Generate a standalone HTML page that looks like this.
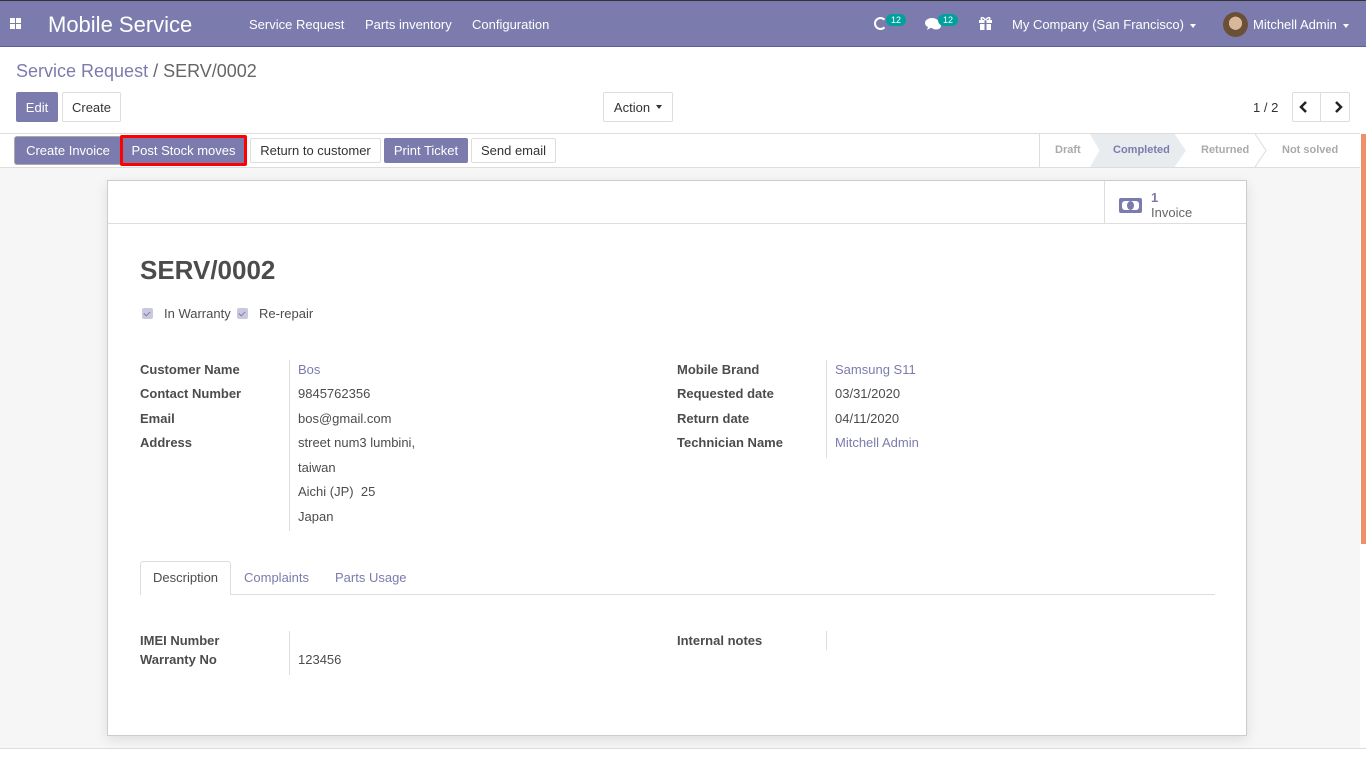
<!DOCTYPE html>
<html><head><meta charset="utf-8"><style>
*{box-sizing:border-box;margin:0;padding:0}
body{width:1366px;height:768px;overflow:hidden;font-family:"Liberation Sans",sans-serif;font-size:13px;color:#4c4c4c;background:#fff;position:relative}
.a{position:absolute;white-space:nowrap}
.nav{position:absolute;left:0;top:0;width:1366px;height:47px;background:#7c7bad;border-top:1px solid #333;border-bottom:1px solid #5f5e97}
.nav .a{color:#fff}
.btn{position:absolute;height:30px;border:1px solid #ddd;background:#fff;color:#333;font-size:13px;display:flex;align-items:center;justify-content:center;border-radius:2px}
.pr{background:#7c7bad;color:#fff;border-color:#7c7bad}
.lbl{font-weight:bold;color:#4c4c4c}
.lnk{color:#7c7bad}
.badge{position:absolute;background:#00a09d;color:#fff;font-size:9px;border-radius:8px;padding:1px 5px}
.cb{position:absolute;width:11px;height:11px;background:#c9c8df;border-radius:2px}
.cb:after{content:"";position:absolute;left:3px;top:2px;width:3px;height:5px;border:solid #7c7bad;border-width:0 1px 1px 0;transform:rotate(45deg)}
.vl{position:absolute;width:1px;background:#ddd}
.car{display:inline-block;width:0;height:0;border-left:3px solid transparent;border-right:3px solid transparent;border-top:4px solid currentColor;vertical-align:middle;margin-left:6px}
</style></head><body>
<div class="nav">
 <div class="a" style="left:10px;top:17px;width:12px;height:12px">
  <div style="position:absolute;left:0;top:0;width:5px;height:5px;background:#fff"></div><div style="position:absolute;left:6px;top:0;width:5px;height:5px;background:#fff"></div><div style="position:absolute;left:0;top:6px;width:5px;height:5px;background:#fff"></div><div style="position:absolute;left:6px;top:6px;width:5px;height:5px;background:#fff"></div></div>
 <div class="a" style="left:48px;top:11px;font-size:22px">Mobile Service</div>
 <div class="a" style="left:249px;top:16px">Service Request</div>
 <div class="a" style="left:365px;top:16px">Parts inventory</div>
 <div class="a" style="left:472px;top:16px">Configuration</div>
 <div class="a" style="left:874px;top:16px;width:13px;height:13px;border:2px solid #fff;border-radius:50%;border-right-color:transparent"></div>
 <div class="badge" style="left:886px;top:13px">12</div>
 <svg class="a" style="left:925px;top:16px" width="16" height="14" viewBox="0 0 16 14"><ellipse cx="7" cy="6" rx="7" ry="5" fill="#fff"/><path d="M3 10 L2 13 L7 10Z" fill="#fff"/><ellipse cx="11" cy="9" rx="5" ry="3.5" fill="#fff"/></svg>
 <div class="badge" style="left:938px;top:13px">12</div>
 <svg class="a" style="left:979px;top:15px" width="13" height="14" viewBox="0 0 13 14"><rect x="0" y="4" width="13" height="3" fill="#fff"/><rect x="1" y="8" width="11" height="6" fill="#fff"/><rect x="5.5" y="4" width="2" height="10" fill="#7c7bad"/><path d="M6.5 4 C3 0 1 2 3 4 M6.5 4 C10 0 12 2 10 4" stroke="#fff" stroke-width="1.5" fill="none"/></svg>
 <div class="a" style="left:1012px;top:16px">My Company (San Francisco)<span class="car"></span></div>
 <div class="a" style="left:1223px;top:11px;width:25px;height:25px;border-radius:50%;background:radial-gradient(circle at 50% 45%,#d9b89a 0 35%,#6b5038 36%)"></div>
 <div class="a" style="left:1253px;top:16px">Mitchell Admin<span class="car"></span></div>
</div>
<div class="a" style="left:16px;top:61px;font-size:18px;color:#7c7bad">Service Request <span style="color:#666">/ SERV/0002</span></div>
<div class="btn pr" style="left:16px;top:92px;width:42px">Edit</div>
<div class="btn" style="left:62px;top:92px;width:59px">Create</div>
<div class="btn" style="left:603px;top:92px;width:70px">Action<span class="car"></span></div>
<div class="a" style="left:1253px;top:100px;color:#333">1 / 2</div>
<div class="btn" style="left:1292px;top:92px;width:58px;justify-content:space-around">
<svg width="10" height="12" viewBox="0 0 10 12"><path d="M7 1 L2 6 L7 11" stroke="#222" stroke-width="2.5" fill="none"/></svg>
<span style="border-left:1px solid #ddd;height:28px"></span>
<svg width="10" height="12" viewBox="0 0 10 12"><path d="M3 1 L8 6 L3 11" stroke="#222" stroke-width="2.5" fill="none"/></svg></div>
<div class="a" style="left:0;top:133px;width:1360px;height:1px;background:#ddd"></div>
<div class="a" style="left:0;top:167px;width:1360px;height:1px;background:#ddd"></div>
<div class="btn pr" style="left:15px;top:137px;width:106px;height:27px;box-shadow:0 0 0 1px #aaa">Create Invoice</div>
<div class="btn pr" style="left:120px;top:135px;width:127px;height:31px;border:3px solid #f00">Post Stock moves</div>
<div class="btn" style="left:250px;top:138px;width:131px;height:25px">Return to customer</div>
<div class="btn pr" style="left:384px;top:138px;width:84px;height:25px">Print Ticket</div>
<div class="btn" style="left:471px;top:138px;width:85px;height:25px">Send email</div>
<div class="a" style="left:1039px;top:134px;width:1px;height:33px;background:#ddd"></div>
<div class="a" style="left:1090px;top:134px;width:96px;height:33px;background:#e9ecef;clip-path:polygon(0 0,88% 0,100% 50%,88% 100%,0 100%,10% 50%)"></div>
<svg class="a" style="left:1254px;top:134px" width="14" height="33"><path d="M1 0 L12 16.5 L1 33" stroke="#ddd" fill="none"/></svg>
<div class="a" style="left:1055px;top:144px;font-size:11px;font-weight:bold;color:#aaa">Draft</div>
<div class="a" style="left:1113px;top:144px;font-size:11px;font-weight:bold;color:#7c7bad">Completed</div>
<div class="a" style="left:1201px;top:144px;font-size:11px;font-weight:bold;color:#aaa">Returned</div>
<div class="a" style="left:1282px;top:144px;font-size:11px;font-weight:bold;color:#aaa">Not solved</div>
<div class="a" style="left:0;top:168px;width:1360px;height:580px;background:#f6f6f6"></div>
<div class="a" style="left:1361px;top:134px;width:5px;height:410px;background:#f0906a"></div>
<div class="a" style="left:107px;top:180px;width:1140px;height:556px;background:#fff;border:1px solid #ccc;box-shadow:0 4px 12px rgba(0,0,0,.1)"></div>
<div class="a" style="left:108px;top:223px;width:1138px;height:1px;background:#ddd"></div>
<div class="a" style="left:1104px;top:181px;width:1px;height:42px;background:#ddd"></div>
<div class="a" style="left:1119px;top:198px;width:23px;height:15px;background:#7c7bad;border-radius:2px"><div style="position:absolute;left:3px;top:3px;width:17px;height:9px;background:#fff;border-radius:3px"></div><div style="position:absolute;left:8px;top:3px;width:7px;height:9px;background:#7c7bad;border-radius:50%"></div></div>
<div class="a lnk" style="left:1151px;top:190px;font-weight:bold">1</div>
<div class="a" style="left:1151px;top:205px;color:#666">Invoice</div>
<div class="a" style="left:140px;top:255px;font-size:26px;font-weight:bold;color:#4c4c4c">SERV/0002</div>
<div class="cb" style="left:142px;top:308px"></div><div class="a" style="left:164px;top:306px">In Warranty</div>
<div class="cb" style="left:237px;top:308px"></div><div class="a" style="left:259px;top:306px">Re-repair</div>
<div class="vl" style="left:289px;top:360px;height:171px"></div>
<div class="a lbl" style="left:140px;top:362px">Customer Name</div><div class="a lnk" style="left:298px;top:362px">Bos</div>
<div class="a lbl" style="left:140px;top:386px">Contact Number</div><div class="a" style="left:298px;top:386px">9845762356</div>
<div class="a lbl" style="left:140px;top:411px">Email</div><div class="a" style="left:298px;top:411px">bos@gmail.com</div>
<div class="a lbl" style="left:140px;top:435px">Address</div><div class="a" style="left:298px;top:435px">street num3 lumbini,</div>
<div class="a" style="left:298px;top:460px">taiwan</div>
<div class="a" style="left:298px;top:484px">Aichi (JP)&nbsp; 25</div>
<div class="a" style="left:298px;top:509px">Japan</div>
<div class="vl" style="left:826px;top:360px;height:98px"></div>
<div class="a lbl" style="left:677px;top:362px">Mobile Brand</div><div class="a lnk" style="left:835px;top:362px">Samsung S11</div>
<div class="a lbl" style="left:677px;top:386px">Requested date</div><div class="a" style="left:835px;top:386px">03/31/2020</div>
<div class="a lbl" style="left:677px;top:411px">Return date</div><div class="a" style="left:835px;top:411px">04/11/2020</div>
<div class="a lbl" style="left:677px;top:435px">Technician Name</div><div class="a lnk" style="left:835px;top:435px">Mitchell Admin</div>
<div class="a" style="left:140px;top:594px;width:1075px;height:1px;background:#ddd"></div>
<div class="a" style="left:140px;top:561px;width:91px;height:34px;background:#fff;border:1px solid #ddd;border-bottom:none;border-radius:3px 3px 0 0"></div>
<div class="a" style="left:153px;top:570px">Description</div>
<div class="a lnk" style="left:244px;top:570px">Complaints</div>
<div class="a lnk" style="left:335px;top:570px">Parts Usage</div>
<div class="vl" style="left:289px;top:631px;height:44px"></div>
<div class="a lbl" style="left:140px;top:633px">IMEI Number</div>
<div class="a lbl" style="left:140px;top:652px">Warranty No</div><div class="a" style="left:298px;top:652px">123456</div>
<div class="vl" style="left:826px;top:631px;height:19px"></div>
<div class="a lbl" style="left:677px;top:633px">Internal notes</div>
<div class="a" style="left:0;top:748px;width:1366px;height:1px;background:#ddd"></div>
</body></html>
